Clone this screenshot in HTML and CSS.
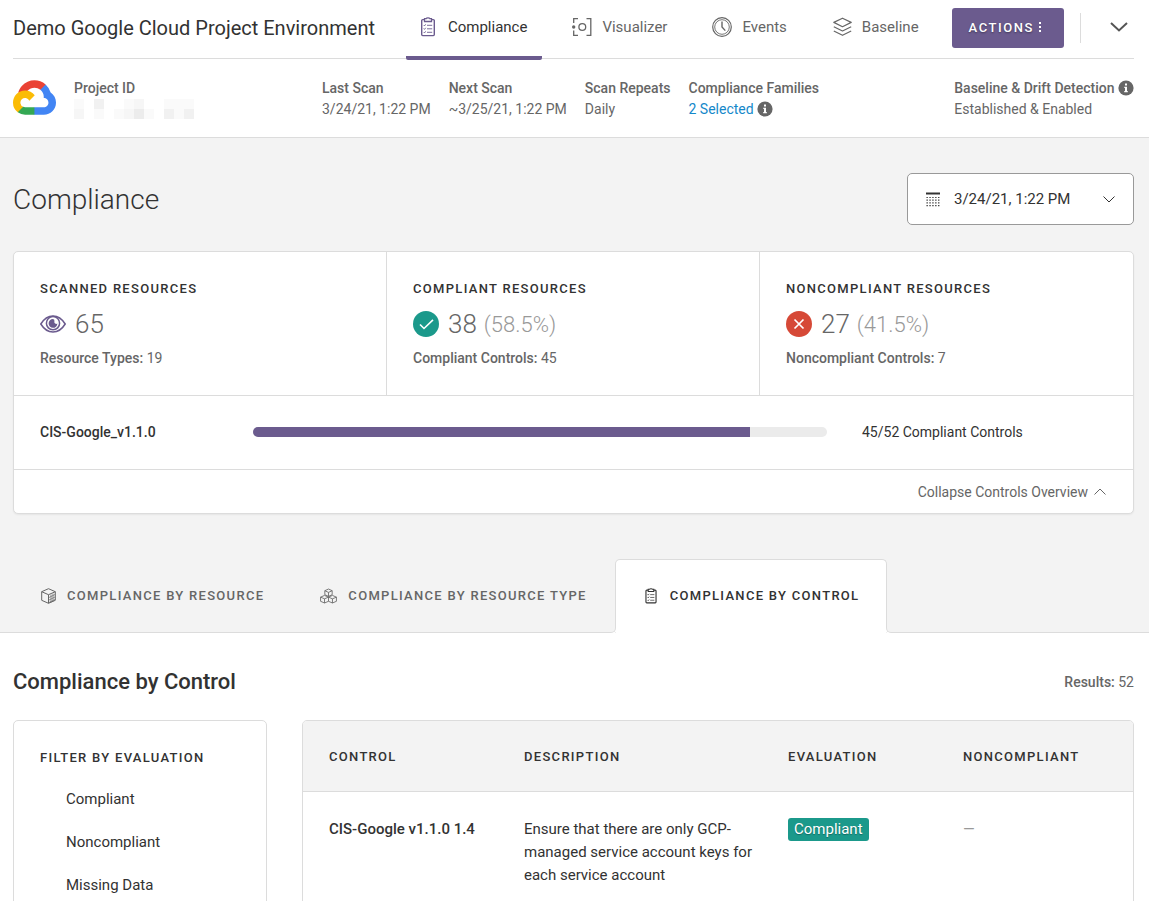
FILE: index.html
```
<!DOCTYPE html>
<html lang="en">
<head>
<meta charset="UTF-8">
<meta name="viewport" content="width=device-width, initial-scale=1.0">
<title>Compliance</title>
<link rel="stylesheet" href="styles.css">
</head>
<body>

<!-- shared icons -->
<svg class="sprite" width="0" height="0" aria-hidden="true">
    <symbol id="clipboard" viewBox="0 0 20 20">
        <path d="M6.500 2.600H4.700a1 1 0 0 0-1 1v14a1 1 0 0 0 1 1h10.600a1 1 0 0 0 1-1v-14a1 1 0 0 0-1-1h-1.800" fill="none" stroke="currentColor" stroke-width="1.4"/>
        <path d="M6.500 1.600h1.700c.3-1 3.300-1 3.600 0h1.700v2.900h-7z" fill="none" stroke="currentColor" stroke-width="1.3"/>
        <path d="M5.700 8l.8.9 1.200-1.600M5.700 11.500l.8.9 1.200-1.600M5.700 15l.8.9 1.200-1.600M9 8.300h5.200M9 11.800h5.200M9 15.300h5.200" fill="none" stroke="currentColor" stroke-width=".9"/>
    </symbol>
    <symbol id="info" viewBox="0 0 16 16">
        <circle cx="8" cy="8" r="7.6" fill="currentColor"/>
        <path d="M7 3.500h2v2H7zM6.300 6.800H9v4.200h.8v1.200H6.200V11H7V8h-.7z" fill="#fff"/>
    </symbol>
</svg>

<header class="header">
    <div class="topbar">
        <h1 class="env-name">Demo Google Cloud Project Environment</h1>
        <nav class="nav">
            <a href="#" class="nav-item current">
                <svg class="nav-icon" aria-hidden="true"><use href="#clipboard"/></svg>
                Compliance
            </a>
            <a href="#" class="nav-item">
                <svg class="nav-icon" viewBox="0 0 20 20" fill="none" stroke="currentColor" stroke-width="1.3" aria-hidden="true">
                    <path d="M6 1.700H1.700V6M1.700 13.500v4.800H6M14.500 1.700h4.300v16.600h-4.300"/>
                    <circle cx="10.300" cy="10" r="3.400"/>
                    <circle cx="1.700" cy="10" r="1.700" fill="currentColor" stroke="none"/>
                </svg>
                Visualizer
            </a>
            <a href="#" class="nav-item">
                <svg class="nav-icon" viewBox="0 0 20 20" fill="none" stroke="currentColor" aria-hidden="true">
                    <circle cx="10" cy="10" r="9.300" stroke-width="1.2"/>
                    <circle cx="10" cy="10" r="7.300" stroke-width=".9"/>
                    <path d="M10 4.500V10l3.300 3.600" stroke-width="1.4"/>
                </svg>
                Events
            </a>
            <a href="#" class="nav-item">
                <svg class="nav-icon" viewBox="0 0 20 20" fill="none" stroke="currentColor" stroke-width="1.2" stroke-linejoin="round" aria-hidden="true">
                    <path d="M10.500 1.200l8.700 4.200-8.700 4.300-8.700-4.300zM1.800 9.700l8.700 4.300 8.700-4.300M1.800 14l8.700 4.300 8.700-4.300"/>
                </svg>
                Baseline
            </a>
        </nav>
        <button type="button" class="actions-btn">
            Actions
            <svg width="3" height="11" viewBox="0 0 3 11" fill="currentColor" aria-hidden="true"><path d="M0 0h2v2H0zM0 4h2v2H0zM0 8h2v2H0z"/></svg>
        </button>
        <div class="more">
            <button type="button" class="more-btn" aria-label="More">
                <svg width="18" height="10" viewBox="0 0 18 10" fill="none" stroke="currentColor" stroke-width="2" aria-hidden="true"><path d="M1 1l8 7.500L17 1"/></svg>
            </button>
        </div>
    </div>

    <div class="infobar">
        <svg class="gcp-logo" viewBox="0 0 256 206" aria-hidden="true">
            <path fill="#EA4335" d="M170.250 56.820l22.250-22.250 1.490-9.370C153.440-11.680 88.980-7.500 52.420 33.920 42.270 45.420 34.730 59.760 30.720 74.570l7.970-1.120 44.500-7.340 3.440-3.510c19.800-21.750 53.270-24.670 76.130-6.170z"/>
            <path fill="#4285F4" d="M224.200 73.920a100.250 100.250 0 0 0-30.210-48.720l-31.230 31.230a55.520 55.520 0 0 1 20.370 44.040v5.540c15.350 0 27.800 12.440 27.800 27.800 0 15.350-12.450 27.480-27.800 27.480h-55.670l-5.470 5.930v33.340l5.470 5.240h55.670c39.930.31 72.560-31.500 72.870-71.430.19-24.200-11.750-46.890-31.800-60.450"/>
            <path fill="#34A853" d="M71.870 205.800h55.590v-44.510H71.870a27.280 27.280 0 0 1-11.400-2.500l-8 2.420-22.320 22.260-1.940 7.530a72.230 72.230 0 0 0 43.660 14.800"/>
            <path fill="#FBBC05" d="M71.870 61.430C31.940 61.660-.24 94.230 0 134.160a72.300 72.300 0 0 0 28.210 56.840l32.260-32.210a27.800 27.800 0 1 1 36.780-36.780l32.260-32.260a72.220 72.220 0 0 0-57.640-28.320"/>
        </svg>
        <dl class="info project">
            <dt>Project ID</dt>
            <dd>
                <svg width="120" height="20" viewBox="0 0 120 20" shape-rendering="crispEdges" aria-hidden="true">
                    <path fill="#fafafa" d="M0 0h10v10H0zM50 0h10v10H50zM90 0h30v10H90zM100 10h10v10h-10zM20 10h10v10H20zM40 10h10v10H40zM70 10h10v10H70z"/>
                    <path fill="#f6f6f6" d="M0 10h10v10H0zM60 0h10v10H60zM50 10h10v10H50z"/>
                    <path fill="#f1f1f1" d="M20 0h10v10H20zM90 10h10v10H90zM110 10h10v10h-10z"/>
                    <path fill="#ececec" d="M60 10h10v10H60z"/>
                </svg>
            </dd>
        </dl>
        <dl class="info">
            <dt>Last Scan</dt>
            <dd>3/24/21, 1:22 PM</dd>
        </dl>
        <dl class="info">
            <dt>Next Scan</dt>
            <dd>~3/25/21, 1:22 PM</dd>
        </dl>
        <dl class="info">
            <dt>Scan Repeats</dt>
            <dd>Daily</dd>
        </dl>
        <dl class="info">
            <dt>Compliance Families</dt>
            <dd><a href="#" class="families">2 Selected</a> <svg class="info-icon" aria-hidden="true"><use href="#info"/></svg></dd>
        </dl>
        <dl class="info drift">
            <dt>Baseline &amp; Drift Detection <svg class="info-icon" aria-hidden="true"><use href="#info"/></svg></dt>
            <dd>Established &amp; Enabled</dd>
        </dl>
    </div>
</header>

<section class="overview">
    <div class="overview-head">
        <h2 class="page-title">Compliance</h2>
        <div class="scan-picker">
            <svg width="15" height="15" viewBox="0 0 15 15" aria-hidden="true">
                <path d="M0 1.500h14" stroke="currentColor" stroke-width="2"/>
                <path d="M.5 5.500h14M.5 8.200h14M.5 10.900h14M.5 13.600h14" stroke="currentColor" stroke-width="1.2" stroke-dasharray="1.300 1.600"/>
            </svg>
            <select class="scan-select" aria-label="Scan date">
                <option>3/24/21, 1:22 PM</option>
            </select>
            <svg width="12" height="7" viewBox="0 0 12 7" fill="none" stroke="currentColor" aria-hidden="true"><path d="M.5.5L6 6 11.500.5"/></svg>
        </div>
    </div>

    <div class="summary">
        <div class="stats">
            <div class="stat">
                <h3 class="caps">Scanned Resources</h3>
                <p class="count">
                    <svg class="stat-icon eye" viewBox="0 0 26 26" fill="none" stroke="currentColor" aria-hidden="true">
                        <path d="M.8 13C4 7.800 8 5 13 5s9 2.800 12.200 8c-3.200 5.200-7.200 8-12.200 8S4 18.200.8 13z" stroke-width="1.5"/>
                        <circle cx="13" cy="12.200" r="6.600" stroke-width="1.5"/>
                        <path d="M13 8a4.400 4.400 0 1 0 4.400 4.600 2 2 0 0 1-3-2.200A2 2 0 0 0 13 8z" fill="currentColor" stroke="none"/>
                    </svg>
                    65
                </p>
                <p class="detail"><b>Resource Types:</b> 19</p>
            </div>
            <div class="stat">
                <h3 class="caps">Compliant Resources</h3>
                <p class="count">
                    <svg class="stat-icon" viewBox="0 0 26 26" fill="none" aria-hidden="true">
                        <circle cx="13" cy="13" r="13" fill="#1b998b"/>
                        <path d="M7 13.500l4 4L20 8.800" stroke="#fff" stroke-width="1.6"/>
                    </svg>
                    38 <span class="percent">(58.5%)</span>
                </p>
                <p class="detail"><b>Compliant Controls:</b> 45</p>
            </div>
            <div class="stat">
                <h3 class="caps">Noncompliant Resources</h3>
                <p class="count">
                    <svg class="stat-icon" viewBox="0 0 26 26" fill="none" aria-hidden="true">
                        <circle cx="13" cy="13" r="13" fill="#d64937"/>
                        <path d="M8.500 8.500l9 9M17.500 8.500l-9 9" stroke="#fff" stroke-width="1.7"/>
                    </svg>
                    27 <span class="percent">(41.5%)</span>
                </p>
                <p class="detail"><b>Noncompliant Controls:</b> 7</p>
            </div>
        </div>
        <div class="family-row">
            <b class="family-name">CIS-Google_v1.1.0</b>
            <div class="bar"><div class="bar-fill" style="width: 86.5%"></div></div>
            <span class="family-count">45/52 Compliant Controls</span>
        </div>
        <div class="summary-foot">
            <button type="button" class="collapse-btn">
                Collapse Controls Overview
                <svg width="12" height="7" viewBox="0 0 12 7" fill="none" stroke="currentColor" aria-hidden="true"><path d="M.5 6.500L6 1l5.500 5.500"/></svg>
            </button>
        </div>
    </div>

    <nav class="tabs">
        <a href="#" class="tab caps">
            <svg width="15" height="16" viewBox="0 0 15 16" fill="none" stroke="currentColor" stroke-linejoin="round" aria-hidden="true">
                <path d="M7.500.7l6.800 3v8.600l-6.800 3-6.800-3V3.700zM.7 3.700l6.800 3 6.800-3M7.500 6.700v8.600"/>
                <path d="M8 9.500l6-3M8 12l6-3M8 14.500l6-3M10 6.500v8M12 5.500v8" stroke-width=".7"/>
            </svg>
            Compliance by Resource
        </a>
        <a href="#" class="tab caps">
            <svg width="17" height="16" viewBox="0 0 18 16" fill="none" stroke="currentColor" stroke-width=".9" stroke-linejoin="round" aria-hidden="true">
                <path d="M9 .6l3.900 1.800v4.200L9 8.400 5.100 6.600V2.400zM5.100 2.400L9 4.200l3.900-1.800M9 4.200v4.200"/>
                <path d="M4.800 7.400L9 9.200v4.400l-4.200 1.800-4.200-1.800V9.200zM.6 9.200L4.800 11 9 9.200M4.800 11v4.400"/>
                <path d="M13.200 7.400l4.200 1.800v4.400l-4.200 1.800L9 13.600M9 9.200l4.200-1.800M9 9.200l4.200 1.800 4.200-1.800M13.200 11v4.400"/>
            </svg>
            Compliance by Resource Type
        </a>
        <a href="#" class="tab caps active">
            <svg width="16" height="16" aria-hidden="true"><use href="#clipboard"/></svg>
            Compliance by Control
        </a>
    </nav>
</section>

<main class="controls">
    <div class="controls-head">
        <h2 class="section-title">Compliance by Control</h2>
        <p class="results"><b>Results:</b> 52</p>
    </div>
    <div class="columns">
        <aside class="filters">
            <h3 class="caps">Filter by Evaluation</h3>
            <ul>
                <li><a href="#">Compliant</a></li>
                <li><a href="#">Noncompliant</a></li>
                <li><a href="#">Missing Data</a></li>
            </ul>
        </aside>
        <div class="table-box">
            <table>
                <thead>
                    <tr>
                        <th class="caps col-control">Control</th>
                        <th class="caps col-description">Description</th>
                        <th class="caps col-evaluation">Evaluation</th>
                        <th class="caps">Noncompliant</th>
                    </tr>
                </thead>
                <tbody>
                    <tr>
                        <td><b>CIS-Google v1.1.0 1.4</b></td>
                        <td>Ensure that there are only GCP-managed service account keys for each service account</td>
                        <td><span class="badge">Compliant</span></td>
                        <td class="none">—</td>
                    </tr>
                </tbody>
            </table>
        </div>
    </div>
</main>

</body>
</html>
```
FILE: styles.css
```
* {
    box-sizing: border-box;
}

body {
    margin: 0;
    font-family: Roboto, "Liberation Sans", sans-serif;
    font-size: 15px;
    color: #323232;
    background-color: #fff;
}

h1, h2, h3, p, ul, dl, dd {
    margin: 0;
    padding: 0;
}

a {
    color: inherit;
    text-decoration: none;
}

b {
    font-weight: 500;
}

button {
    font-family: inherit;
    border: none;
    background: none;
    cursor: pointer;
}

svg {
    flex-shrink: 0;
}

.sprite {
    position: absolute;
}

.caps {
    font-size: 13px;
    font-weight: 500;
    line-height: 20px;
    letter-spacing: 0.1em;
    text-transform: uppercase;
}

/* header */

.header {
    padding: 0 15px 0 13px;
    border-bottom: 1px solid #dcdcdc;
}

.topbar {
    display: flex;
    align-items: center;
    height: 59px;
    border-bottom: 1px solid #dcdcdc;
}

.env-name {
    padding-bottom: 2px;
    font-size: 20px;
    font-weight: 400;
    white-space: nowrap;
}

.nav {
    display: flex;
    gap: 18px;
    margin-left: auto;
    align-self: stretch;
}

.nav-item {
    display: flex;
    align-items: center;
    gap: 10px;
    height: 60px;
    padding: 0 15px 2px 12px;
    border-bottom: 4px solid transparent;
    border-radius: 2px;
    color: #666;
}

.nav-item.current {
    color: #323232;
    border-bottom-color: #6b5b8e;
}

.nav-icon {
    width: 20px;
    height: 20px;
}

.current .nav-icon {
    color: #6b5b8e;
}

.actions-btn {
    display: flex;
    align-items: center;
    gap: 5px;
    height: 40px;
    margin: 0 16px 2px 18px;
    padding: 0 22px 2px 17px;
    border-radius: 3px;
    background-color: #6b5b8e;
    color: #fff;
    font-size: 13px;
    font-weight: 500;
    letter-spacing: 0.12em;
    text-transform: uppercase;
    text-shadow: 0 1px 2px rgba(0, 0, 0, 0.4);
}

.more {
    display: flex;
    height: 30px;
    margin-bottom: 2px;
    border-left: 1px solid #dcdcdc;
}

.more-btn {
    display: flex;
    align-items: center;
    padding: 0 6px 2px 29px;
    color: #555;
}

.infobar {
    display: flex;
    gap: 18px;
    height: 78px;
    padding-top: 19px;
    font-size: 14px;
    line-height: 21px;
    color: #666;
    white-space: nowrap;
}

.gcp-logo {
    width: 43px;
    height: 35px;
    margin-top: 2px;
}

.info dt {
    font-weight: 500;
}

.project {
    width: 230px;
}

.drift {
    margin-left: auto;
}

.families {
    color: #1488ca;
}

.info-icon {
    width: 16px;
    height: 16px;
    vertical-align: -3px;
}

/* overview */

.overview {
    background-color: #f3f3f3;
    padding: 35px 15px 0 13px;
    border-bottom: 1px solid #dcdcdc;
}

.overview-head {
    display: flex;
    justify-content: space-between;
    align-items: center;
    margin-bottom: 26px;
}

.page-title {
    font-size: 28px;
    font-weight: 300;
}

.scan-picker {
    display: flex;
    align-items: center;
    width: 227px;
    height: 52px;
    padding: 0 18px;
    border: 1px solid #999;
    border-radius: 5px;
    background-color: #fff;
}

.scan-select {
    flex: 1;
    height: 50px;
    padding: 0 0 0 13px;
    border: none;
    appearance: none;
    background: none;
    font-family: inherit;
    font-size: 15px;
    color: inherit;
}

.summary {
    border: 1px solid #dcdcdc;
    border-radius: 5px;
    background-color: #fff;
    box-shadow: 0 1px 2px rgba(0, 0, 0, 0.06);
}

.stats {
    display: grid;
    grid-template-columns: repeat(3, 1fr);
}

.stat {
    height: 143px;
    padding: 27px 26px 0;
    border-right: 1px solid #dcdcdc;
}

.stat:last-child {
    border-right: none;
}

.count {
    display: flex;
    align-items: center;
    gap: 9px;
    height: 50px;
    font-size: 26px;
    font-weight: 300;
    color: #666;
}

.stat-icon {
    width: 26px;
    height: 26px;
}

.eye {
    color: #6b5b8e;
}

.percent {
    margin-left: -2px;
    font-size: 22px;
    color: #999;
}

.detail {
    font-size: 14px;
    line-height: 18px;
    color: #666;
}

.family-row {
    display: grid;
    grid-template-columns: 20% 1fr 280px;
    align-items: center;
    height: 74px;
    padding: 0 26px 2px;
    border-top: 1px solid #dcdcdc;
    font-size: 14px;
}

.bar {
    height: 10px;
    border-radius: 5px;
    background-color: #ebebeb;
    overflow: hidden;
}

.bar-fill {
    height: 100%;
    background-color: #6b5b8e;
}

.family-count {
    padding-left: 35px;
}

.summary-foot {
    display: flex;
    justify-content: flex-end;
    height: 44px;
    padding: 0 27px;
    border-top: 1px solid #dcdcdc;
}

.collapse-btn {
    display: flex;
    align-items: center;
    gap: 6px;
    padding: 0;
    font-size: 14px;
    color: #666;
}

/* tabs */

.tabs {
    display: flex;
    margin-top: 45px;
    margin-bottom: -1px;
}

.tab {
    display: flex;
    align-items: center;
    gap: 11px;
    height: 74px;
    padding: 0 27px 2px;
    border: 1px solid transparent;
    border-bottom: none;
    border-radius: 5px 5px 0 0;
    color: #666;
}

.tab.active {
    position: relative;
    border-color: #dcdcdc;
    background-color: #fff;
    color: #323232;
}

/* curved feet of the active tab */
.tab.active::before,
.tab.active::after {
    content: "";
    position: absolute;
    bottom: 0;
    width: 5px;
    height: 5px;
    border-bottom: 1px solid #dcdcdc;
    background-color: #f3f3f3;
}

.tab.active::before {
    right: 100%;
    border-right: 1px solid #dcdcdc;
    border-bottom-right-radius: 5px;
    box-shadow: 1px 1px 0 #fff;
}

.tab.active::after {
    left: 100%;
    border-left: 1px solid #dcdcdc;
    border-bottom-left-radius: 5px;
    box-shadow: -1px 1px 0 #fff;
}

/* controls */

.controls {
    padding: 0 15px 26px 13px;
}

.controls-head {
    display: flex;
    justify-content: space-between;
    align-items: center;
    height: 87px;
    padding-top: 10px;
}

.section-title {
    font-size: 22px;
    font-weight: 500;
}

.results {
    font-size: 14px;
    color: #666;
}

.columns {
    display: grid;
    grid-template-columns: 254px 1fr;
    gap: 35px;
}

.filters {
    padding: 27px 26px;
    border: 1px solid #dcdcdc;
    border-radius: 5px;
}

.filters ul {
    margin-top: 10px;
    padding-left: 26px;
    list-style: none;
}

.filters a {
    display: block;
    line-height: 43px;
}

.table-box {
    border: 1px solid #dcdcdc;
    border-radius: 5px;
    overflow: hidden;
}

table {
    width: 100%;
    table-layout: fixed;
    border-spacing: 0;
}

th {
    height: 71px;
    padding: 2px 0 0 26px;
    background-color: #f3f3f3;
    border-bottom: 1px solid #dcdcdc;
    text-align: left;
}

td {
    padding: 26px 0 26px 26px;
    line-height: 23px;
    vertical-align: top;
}

.col-control {
    width: 195px;
}

.col-description {
    width: 264px;
}

.col-evaluation {
    width: 175px;
}

.badge {
    display: inline-block;
    padding: 0 6px;
    border-radius: 3px;
    background-color: #1b998b;
    color: #fff;
    text-shadow: 0 1px 1px rgba(0, 0, 0, 0.3);
}

.none {
    color: #999;
}
```
